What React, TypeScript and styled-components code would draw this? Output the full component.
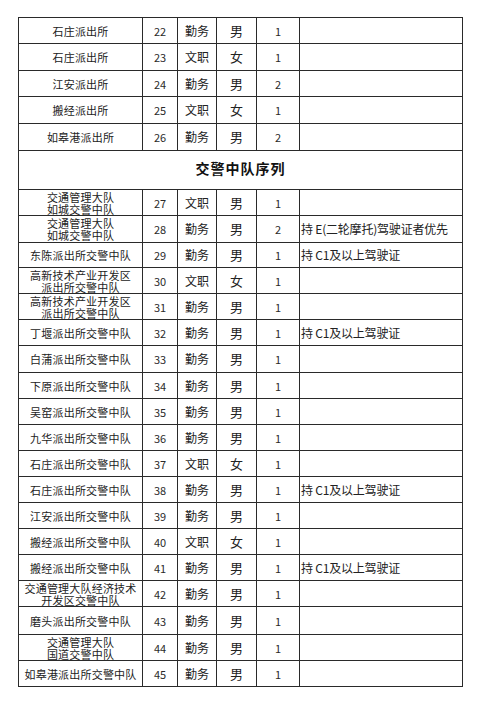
import React from "react";
import styled, { createGlobalStyle } from "styled-components";

const Global = createGlobalStyle`
  html, body { margin: 0; padding: 0; background: #ffffff; }
  body { font-family: "Noto Sans CJK SC", "Liberation Sans", sans-serif; color: #222; }
`;

const Page = styled.div`
  padding: 17px 0 0 18px;
  width: 485px;
  height: 705px;
  box-sizing: border-box;
`;

const Table = styled.div`
  width: 445px;
  border-top: 1px solid #2a2a2a;
  border-left: 1px solid #2a2a2a;
  box-sizing: border-box;
`;

const Row = styled.div<{ $h: number }>`
  display: grid;
  grid-template-columns: 124px 35px 39px 40px 43px 163px;
  height: ${(p) => p.$h}px;
`;

const Cell = styled.div<{ $align?: "left" | "center" }>`
  box-sizing: border-box;
  border-right: 1px solid #2a2a2a;
  border-bottom: 1px solid #2a2a2a;
  display: flex;
  align-items: center;
  justify-content: ${(p) => (p.$align === "left" ? "flex-start" : "center")};
  padding-left: ${(p) => (p.$align === "left" ? "1px" : "0")};
  font-size: 12px;
  line-height: 12px;
  white-space: nowrap;
  overflow: hidden;
`;

const UnitCell = styled(Cell)`
  font-size: 11px;
  line-height: 12px;
  letter-spacing: 0.2px;
  text-align: center;
  flex-direction: column;
`;

const UnitLine = styled.span`
  display: block;
  height: 12px;
`;

const NumCell = styled(Cell)`
  font-size: 11px;
  color: #2a2a2a;
`;

const SexCell = styled(Cell)`
  font-size: 13px;
`;

const NoteCell = styled(Cell)`
  font-size: 12px;
  letter-spacing: -0.2px;
`;

const HeaderRow = styled.div<{ $h: number }>`
  height: ${(p) => p.$h}px;
  box-sizing: border-box;
  border-right: 1px solid #2a2a2a;
  border-bottom: 1px solid #2a2a2a;
  display: flex;
  align-items: center;
  justify-content: center;
  padding-bottom: 5px;
  font-size: 14px;
  font-weight: 700;
  letter-spacing: 1px;
  color: #111;
`;

type Item = {
  unit: string[];
  no: number;
  kind: string;
  sex: string;
  count: number;
  note?: string;
  h: number;
};

const C1 = "持 C1及以上驾驶证";

const groupA: Item[] = [
  { unit: ["石庄派出所"], no: 22, kind: "勤务", sex: "男", count: 1, h: 26 },
  { unit: ["石庄派出所"], no: 23, kind: "文职", sex: "女", count: 1, h: 27 },
  { unit: ["江安派出所"], no: 24, kind: "勤务", sex: "男", count: 2, h: 26 },
  { unit: ["搬经派出所"], no: 25, kind: "文职", sex: "女", count: 1, h: 27 },
  { unit: ["如皋港派出所"], no: 26, kind: "勤务", sex: "男", count: 2, h: 27 },
];

const groupB: Item[] = [
  { unit: ["交通管理大队", "如城交警中队"], no: 27, kind: "文职", sex: "男", count: 1, h: 26 },
  { unit: ["交通管理大队", "如城交警中队"], no: 28, kind: "勤务", sex: "男", count: 2, note: "持 E(二轮摩托)驾驶证者优先", h: 27 },
  { unit: ["东陈派出所交警中队"], no: 29, kind: "勤务", sex: "男", count: 1, note: C1, h: 25 },
  { unit: ["高新技术产业开发区", "派出所交警中队"], no: 30, kind: "文职", sex: "女", count: 1, h: 26 },
  { unit: ["高新技术产业开发区", "派出所交警中队"], no: 31, kind: "勤务", sex: "男", count: 1, h: 26 },
  { unit: ["丁堰派出所交警中队"], no: 32, kind: "勤务", sex: "男", count: 1, note: C1, h: 26 },
  { unit: ["白蒲派出所交警中队"], no: 33, kind: "勤务", sex: "男", count: 1, h: 27 },
  { unit: ["下原派出所交警中队"], no: 34, kind: "勤务", sex: "男", count: 1, h: 26 },
  { unit: ["吴窑派出所交警中队"], no: 35, kind: "勤务", sex: "男", count: 1, h: 26 },
  { unit: ["九华派出所交警中队"], no: 36, kind: "勤务", sex: "男", count: 1, h: 26 },
  { unit: ["石庄派出所交警中队"], no: 37, kind: "文职", sex: "女", count: 1, h: 26 },
  { unit: ["石庄派出所交警中队"], no: 38, kind: "勤务", sex: "男", count: 1, note: C1, h: 26 },
  { unit: ["江安派出所交警中队"], no: 39, kind: "勤务", sex: "男", count: 1, h: 26 },
  { unit: ["搬经派出所交警中队"], no: 40, kind: "文职", sex: "女", count: 1, h: 26 },
  { unit: ["搬经派出所交警中队"], no: 41, kind: "勤务", sex: "男", count: 1, note: C1, h: 26 },
  { unit: ["交通管理大队经济技术", "开发区交警中队"], no: 42, kind: "勤务", sex: "男", count: 1, h: 26 },
  { unit: ["磨头派出所交警中队"], no: 43, kind: "勤务", sex: "男", count: 1, h: 28 },
  { unit: ["交通管理大队", "国道交警中队"], no: 44, kind: "勤务", sex: "男", count: 1, h: 26 },
  { unit: ["如皋港派出所交警中队"], no: 45, kind: "勤务", sex: "男", count: 1, h: 26 },
];

const DataRow: React.FC<{ item: Item }> = ({ item }) => (
  <Row $h={item.h}>
    <UnitCell>
      {item.unit.map((u, i) => (
        <UnitLine key={i}>{u}</UnitLine>
      ))}
    </UnitCell>
    <NumCell>{item.no}</NumCell>
    <Cell>{item.kind}</Cell>
    <SexCell>{item.sex}</SexCell>
    <NumCell>{item.count}</NumCell>
    <NoteCell $align="left">{item.note ?? ""}</NoteCell>
  </Row>
);

export default function App() {
  return (
    <>
      <Global />
      <Page>
        <Table>
          {groupA.map((it) => (
            <DataRow key={it.no} item={it} />
          ))}
          <HeaderRow $h={39}>交警中队序列</HeaderRow>
          {groupB.map((it) => (
            <DataRow key={it.no} item={it} />
          ))}
        </Table>
      </Page>
    </>
  );
}
